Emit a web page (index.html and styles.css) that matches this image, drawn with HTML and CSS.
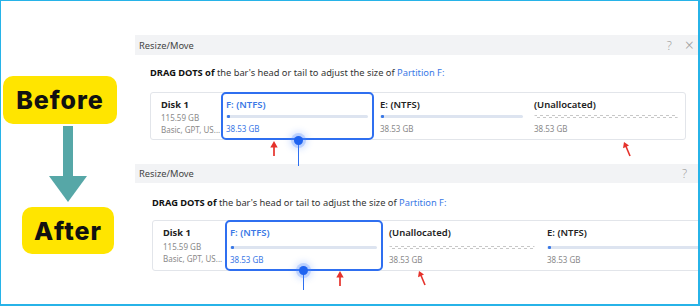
FILE: index.html
```html
<!DOCTYPE html>
<html lang="en">
<head>
    <meta charset="UTF-8">
    <meta name="viewport" content="width=device-width, initial-scale=1.0">
    <title>Resize/Move - Before and After</title>
    <link rel="stylesheet" href="styles.css">
</head>
<body>

<div class="frame">

    <!-- Left labels -->
    <div class="labels">
        <div class="tag tag-before">Before</div>
        <svg class="down-arrow" width="40" height="78" viewBox="0 0 40 78">
            <rect x="15" y="0" width="10" height="52" fill="#56a7a7"/>
            <polygon points="1,50 39,50 20,76" fill="#56a7a7"/>
        </svg>
        <div class="tag tag-after">After</div>
    </div>

    <div class="shots">

        <!-- Before -->
        <section class="panel panel-before">
            <div class="panel-head">
                <span>Resize/Move</span>
                <span class="head-icons"><span>?</span><span class="close">&times;</span></span>
            </div>
            <div class="panel-body">
                <p class="hint"><b>DRAG DOTS of</b> the bar's head or tail to adjust the size of <span class="link">Partition F:</span></p>
                <div class="disk-card">
                    <div class="disk-info">
                        <div class="disk-name">Disk 1</div>
                        <div class="disk-cap">115.59 GB</div>
                        <div class="disk-type">Basic, GPT, US...</div>
                    </div>
                    <div class="part part-selected">
                        <div class="part-name">F: (NTFS)</div>
                        <div class="bar"></div>
                        <div class="part-size">38.53 GB</div>
                    </div>
                    <div class="part part-e">
                        <div class="part-name">E: (NTFS)</div>
                        <div class="bar"></div>
                        <div class="part-size">38.53 GB</div>
                    </div>
                    <div class="part part-free">
                        <div class="part-name">(Unallocated)</div>
                        <div class="bar bar-free"></div>
                        <div class="part-size">38.53 GB</div>
                    </div>

                    <div class="handle handle-1"></div>
                    <svg class="red-arrow arrow-1" width="10" height="16" viewBox="0 0 10 16">
                        <line x1="5" y1="3" x2="5" y2="15" stroke="#e5322b" stroke-width="1.7"/>
                        <polygon points="1.3,6.5 5,0 8.7,6.5" fill="#e5322b"/>
                    </svg>
                    <svg class="red-arrow arrow-2" width="12" height="16" viewBox="0 0 12 16">
                        <line x1="3" y1="3" x2="8" y2="15" stroke="#e5322b" stroke-width="1.6"/>
                        <polygon points="2,1 1,7.2 7,4.4" fill="#e5322b"/>
                    </svg>
                </div>
            </div>
        </section>

        <!-- After -->
        <section class="panel panel-after">
            <div class="panel-head">
                <span>Resize/Move</span>
                <span class="head-icons"><span>?</span></span>
            </div>
            <div class="panel-body">
                <p class="hint"><b>DRAG DOTS of</b> the bar's head or tail to adjust the size of <span class="link">Partition F:</span></p>
                <div class="disk-card">
                    <div class="disk-info">
                        <div class="disk-name">Disk 1</div>
                        <div class="disk-cap">115.59 GB</div>
                        <div class="disk-type">Basic, GPT, US...</div>
                    </div>
                    <div class="part part-selected">
                        <div class="part-name">F: (NTFS)</div>
                        <div class="bar"></div>
                        <div class="part-size">38.53 GB</div>
                    </div>
                    <div class="part part-free">
                        <div class="part-name">(Unallocated)</div>
                        <div class="bar bar-free"></div>
                        <div class="part-size">38.53 GB</div>
                    </div>
                    <div class="part part-e">
                        <div class="part-name">E: (NTFS)</div>
                        <div class="bar"></div>
                        <div class="part-size">38.53 GB</div>
                    </div>

                    <div class="handle handle-2"></div>
                    <svg class="red-arrow arrow-3" width="10" height="16" viewBox="0 0 10 16">
                        <line x1="5" y1="3" x2="5" y2="15" stroke="#e5322b" stroke-width="1.7"/>
                        <polygon points="1.3,6.5 5,0 8.7,6.5" fill="#e5322b"/>
                    </svg>
                    <svg class="red-arrow arrow-4" width="12" height="16" viewBox="0 0 12 16">
                        <line x1="3" y1="3" x2="8" y2="15" stroke="#e5322b" stroke-width="1.6"/>
                        <polygon points="2,1 1,7.2 7,4.4" fill="#e5322b"/>
                    </svg>
                </div>
            </div>
        </section>

    </div>
</div>

</body>
</html>
```

FILE: styles.css
```css
body {
    margin: 0;
    background: #fff;
}

.frame {
    width: 700px;
    height: 306px;
    box-sizing: border-box;
    border: solid #27b3e8;
    border-width: 1px 2px 2px 1px;
    display: flex;
    overflow: hidden;
    background: #fff;
    font-family: "Noto Sans", sans-serif;
}

/* left side labels */
.labels {
    width: 134px;
    flex: none;
    display: flex;
    flex-direction: column;
}

.tag {
    background: #ffe500;
    border-radius: 10px;
    font-family: Inter, sans-serif;
    font-weight: 800;
    font-size: 25px;
    letter-spacing: 1px;
    color: #111;
    display: flex;
    align-items: center;
    justify-content: center;
    box-sizing: border-box;
}

.tag-before {
    width: 114px;
    height: 48px;
    margin: 75px 0 0 2px;
}

.down-arrow {
    display: block;
    margin: 2px 0 0 47px;
}

.tag-after {
    width: 92px;
    height: 47px;
    margin: 3px 0 0 21px;
}

/* screenshots */
.shots {
    flex: 1;
    min-width: 0;
    padding-top: 34px;
}

.panel-head {
    height: 20px;
    background: #f2f3f5;
    display: flex;
    align-items: center;
    justify-content: space-between;
    padding: 0 4px 0 4px;
    font-size: 9.3px;
    color: #444;
}

.head-icons {
    display: flex;
    align-items: center;
    gap: 13px;
    color: #a0a0a0;
    font-size: 12px;
    font-weight: 300;
}

.head-icons .close {
    font-size: 16px;
}

.panel-body {
    padding: 11px 0 0 15px;
    height: 109px;
    box-sizing: border-box;
}

.hint {
    margin: 0;
    font-size: 9.3px;
    line-height: 14px;
    color: #333;
    white-space: nowrap;
}

.hint b {
    color: #111;
}

.link {
    color: #3a78e6;
}

.disk-card {
    position: relative;
    margin-top: 12px;
    width: 536px;
    height: 48px;
    box-sizing: border-box;
    border: 1px solid #e2e5ea;
    border-radius: 3px;
    display: flex;
}

.disk-info {
    width: 70px;
    flex: none;
    box-sizing: border-box;
    padding: 5px 2px 0 10px;
    white-space: nowrap;
    overflow: hidden;
}

.disk-name {
    font-size: 9.3px;
    line-height: 13px;
    font-weight: 700;
    color: #222;
}

.disk-cap,
.disk-type {
    font-size: 8px;
    line-height: 12px;
    color: #8a8a8a;
}

.disk-cap {
    margin-top: 1px;
}

.part {
    box-sizing: border-box;
    padding: 5px 6px 0;
    white-space: nowrap;
}

.part-name {
    font-size: 9.5px;
    line-height: 13px;
    font-weight: 600;
    color: #222;
}

.part-size {
    margin-top: 5px;
    font-size: 8px;
    line-height: 12px;
    color: #8a8a8a;
}

.bar {
    position: relative;
    margin-top: 4px;
    height: 3px;
    border-radius: 2px;
    background: #dde4f0;
}

.bar::before {
    content: "";
    position: absolute;
    left: 1px;
    top: 0;
    width: 3px;
    height: 3px;
    border-radius: 1px;
    background: #3a78e6;
}

.bar-free {
    background-color: transparent;
    background-image:
        repeating-linear-gradient(90deg, #c8c8c8 0 3px, transparent 3px 6px),
        repeating-linear-gradient(90deg, transparent 0 3px, #c8c8c8 3px 6px);
    background-size: 100% 1px;
    background-position: 0 0, 0 2px;
    background-repeat: no-repeat;
}

.bar-free::before {
    display: none;
}

.part-selected {
    flex: none;
    width: 153px;
    height: 48px;
    margin: -1px 0;
    padding: 4px 4px 0 3px;
    border: 2px solid #2f6ff0;
    border-radius: 5px;
}

.part-selected .part-name,
.part-selected .part-size {
    color: #3a78e6;
}

.panel-before .part-e {
    width: 155px;
    flex: none;
}

.panel-before .part-free {
    flex: 1;
    padding: 5px 7px 0 5px;
}

/* after panel */
.panel-after {
    width: 575px;
}

.panel-after .panel-head {
    height: 19px;
    padding-right: 23px;
}

.panel-after .panel-body {
    padding: 13px 0 0 17px;
}

.panel-after .disk-card {
    margin-top: 10px;
    width: 560px;
    height: 51px;
}

.panel-after .disk-info {
    width: 72px;
}

.panel-after .disk-cap {
    margin-top: 2px;
}

.panel-after .part-selected {
    width: 158px;
    height: 51px;
}

.panel-after .bar {
    margin-top: 7px;
}

.panel-after .part-free {
    width: 158px;
    flex: none;
}

.panel-after .part-e {
    flex: 1;
    padding-right: 4px;
}

/* overlays: drag handle and red pointers */
.handle {
    position: absolute;
    width: 1px;
    background: #2d6ff0;
    z-index: 2;
}

.handle::before {
    content: "";
    position: absolute;
    left: -4px;
    top: -4px;
    width: 9px;
    height: 9px;
    border-radius: 50%;
    background: #1f63f0;
    box-shadow: 0 0 0 3px rgba(70, 130, 255, 0.25), 0 0 6px 5px rgba(70, 130, 255, 0.2);
}

.handle-1 {
    left: 147px;
    top: 47px;
    height: 26px;
}

.handle-2 {
    left: 150px;
    top: 49px;
    height: 20px;
}

.red-arrow {
    position: absolute;
    z-index: 2;
}

.arrow-1 {
    left: 118px;
    top: 48px;
}

.arrow-2 {
    left: 471px;
    top: 48px;
}

.arrow-3 {
    left: 182px;
    top: 50px;
}

.arrow-4 {
    left: 264px;
    top: 49px;
}
```
